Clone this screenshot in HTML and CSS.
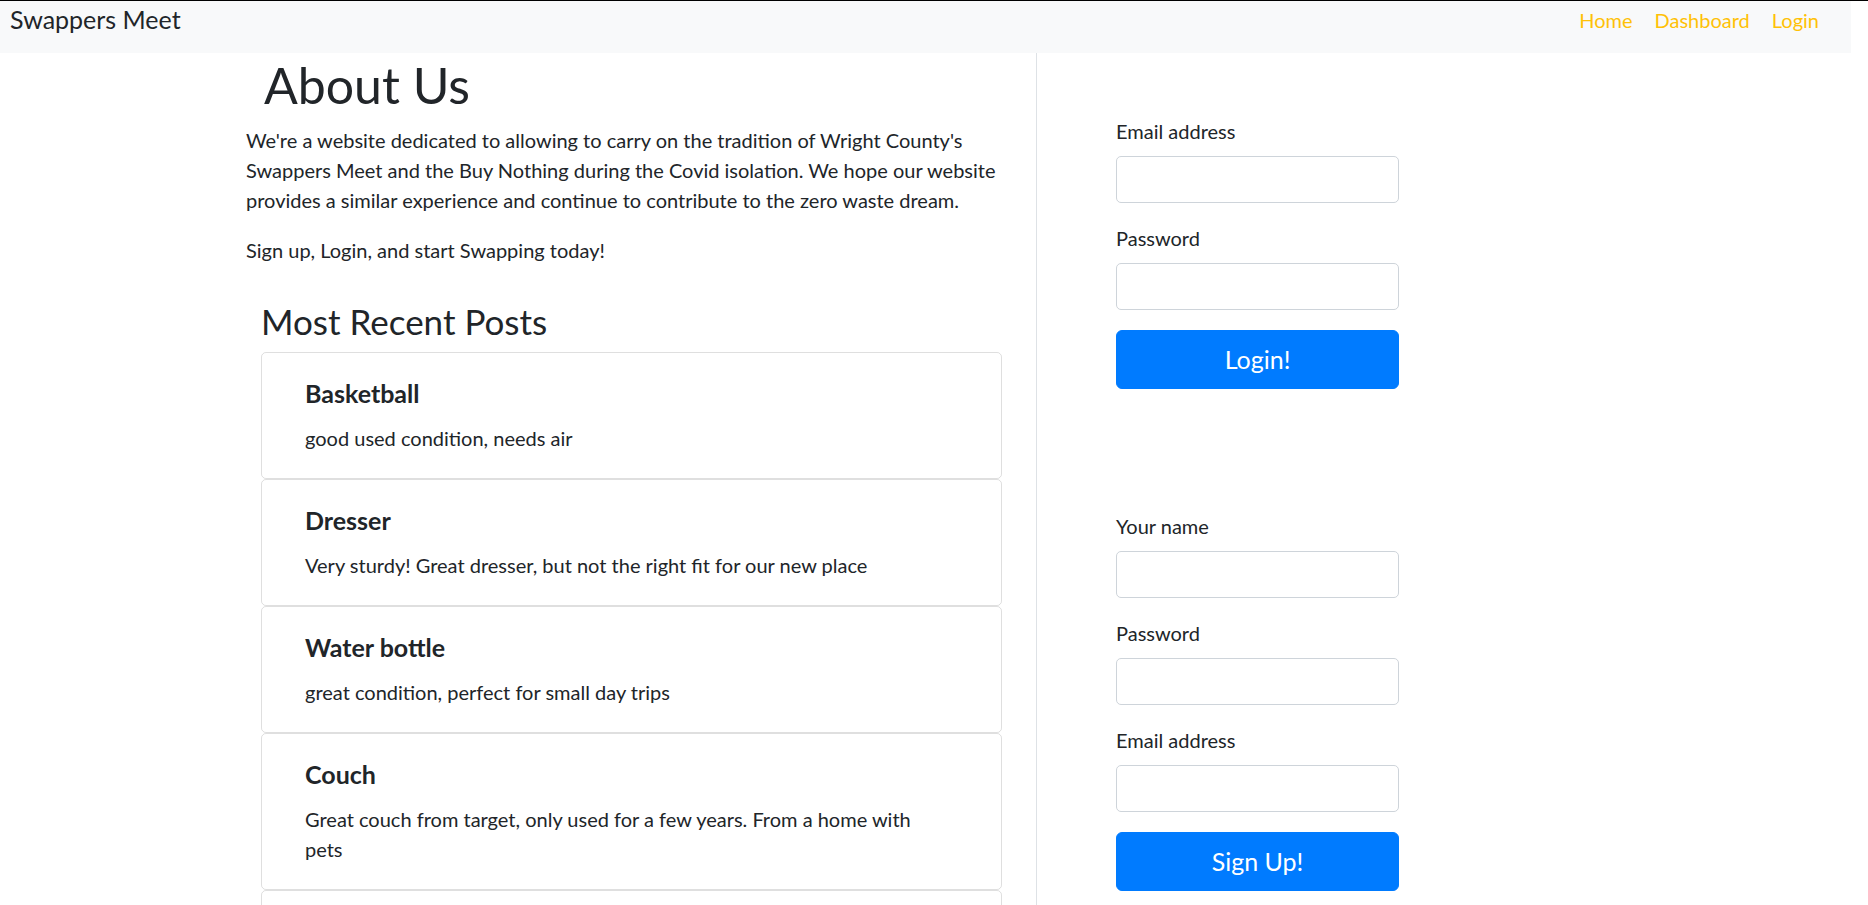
FILE: index.html
```html
<!DOCTYPE html>
<html lang="en">
<head>
<meta charset="utf-8">
<title>Swappers Meet</title>
<link rel="stylesheet" href="styles.css">
</head>
<body>
<nav class="navbar">
  <a class="brand" href="#">Swappers Meet</a>
  <ul class="nav-links">
    <li><a class="nav-link" href="#">Home</a></li>
    <li><a class="nav-link" href="#">Dashboard</a></li>
    <li><a class="nav-link" href="#">Login</a></li>
  </ul>
</nav>
<main class="layout">
  <section class="about-col">
    <h1 class="about-title">About Us</h1>
    <p class="about-text">We're a website dedicated to allowing to carry on the tradition of Wright County's Swappers Meet and the Buy Nothing during the Covid isolation. We hope our website provides a similar experience and continue to contribute to the zero waste dream.</p>
    <p class="about-text">Sign up, Login, and start Swapping today!</p>
    <section class="posts">
      <h3 class="posts-title">Most Recent Posts</h3>
      <div class="post-card">
        <h5 class="post-title">Basketball</h5>
        <p class="post-text">good used condition, needs air</p>
      </div>
      <div class="post-card">
        <h5 class="post-title">Dresser</h5>
        <p class="post-text">Very sturdy! Great dresser, but not the right fit for our new place</p>
      </div>
      <div class="post-card">
        <h5 class="post-title">Water bottle</h5>
        <p class="post-text">great condition, perfect for small day trips</p>
      </div>
      <div class="post-card">
        <h5 class="post-title">Couch</h5>
        <p class="post-text">Great couch from target, only used for a few years. From a home with pets</p>
      </div>
      <div class="post-card">
        <h5 class="post-title">&nbsp;</h5>
        <p class="post-text">&nbsp;</p>
      </div>
    </section>
  </section>
  <section class="forms-col">
    <form class="auth-form">
      <div class="field">
        <label class="field-label">Email address</label>
        <input class="field-input" type="email">
      </div>
      <div class="field">
        <label class="field-label">Password</label>
        <input class="field-input" type="password">
      </div>
      <button class="btn" type="button">Login!</button>
    </form>
    <form class="auth-form signup-form">
      <div class="field">
        <label class="field-label">Your name</label>
        <input class="field-input" type="text">
      </div>
      <div class="field">
        <label class="field-label">Password</label>
        <input class="field-input" type="password">
      </div>
      <div class="field">
        <label class="field-label">Email address</label>
        <input class="field-input" type="email">
      </div>
      <button class="btn" type="button">Sign Up!</button>
    </form>
  </section>
</main>
</body>
</html>
```
FILE: styles.css
```css
* { box-sizing: border-box; }

body {
  margin: 0;
  border-top: 1px solid #000;
  font-family: "Lato", "Liberation Sans", sans-serif;
  font-size: 20px;
  line-height: 1.5;
  color: #212529;
  background: #fff;
}

.navbar {
  width: calc(100% - 17px);
  height: 52px;
  background: #f8f9fa;
  display: flex;
  justify-content: space-between;
  align-items: flex-start;
  padding: 0 21px 0 10px;
}

.brand {
  font-size: 25px;
  line-height: 37.5px;
  color: #212529;
  text-decoration: none;
}

.nav-links {
  display: flex;
  list-style: none;
  margin: 0;
  padding: 3.5px 0 0;
}

.nav-link {
  display: block;
  padding: 0 11px;
  line-height: 30px;
  color: #ffc107;
  text-decoration: none;
}

.layout {
  display: flex;
  align-items: stretch;
}

.about-col {
  flex: 0 0 1037px;
  padding: 0 19px 0 246px;
  border-right: 1px solid #dee2e6;
}

.about-title {
  font-size: 50px;
  line-height: 1.2;
  font-weight: 400;
  margin: 2px 0 10px;
  padding-left: 18px;
}

.about-text { margin: 0 0 20px; }

.posts {
  margin: 0 15px;
  padding-top: 15px;
}

.posts-title {
  font-size: 35px;
  line-height: 1.2;
  font-weight: 400;
  margin: 0 0 10px;
}

.post-card {
  border: 1px solid rgba(0, 0, 0, .125);
  border-radius: 5px;
  padding: 25px 60px 25px 43px;
}

.post-title {
  font-size: 25px;
  line-height: 1.2;
  font-weight: 700;
  margin: 0 0 15px;
}

.post-text { margin: 0; }

.forms-col { padding: 62.5px 0 0 79px; }

.auth-form { width: 283px; }

.signup-form { margin-top: 121.5px; }

.field { margin-bottom: 20px; }

.field-label {
  display: block;
  margin-bottom: 10px;
}

.field-input {
  display: block;
  width: 100%;
  height: 47px;
  padding: 7.5px 15px;
  border: 1px solid #ced4da;
  border-radius: 5px;
  font: inherit;
  color: #495057;
  background: #fff;
}

.btn {
  display: block;
  width: 100%;
  height: 59.5px;
  padding: 0;
  background: #007bff;
  color: #fff;
  border: 1px solid #007bff;
  border-radius: 6px;
  font-family: inherit;
  font-size: 25px;
  line-height: 1.5;
}
```
